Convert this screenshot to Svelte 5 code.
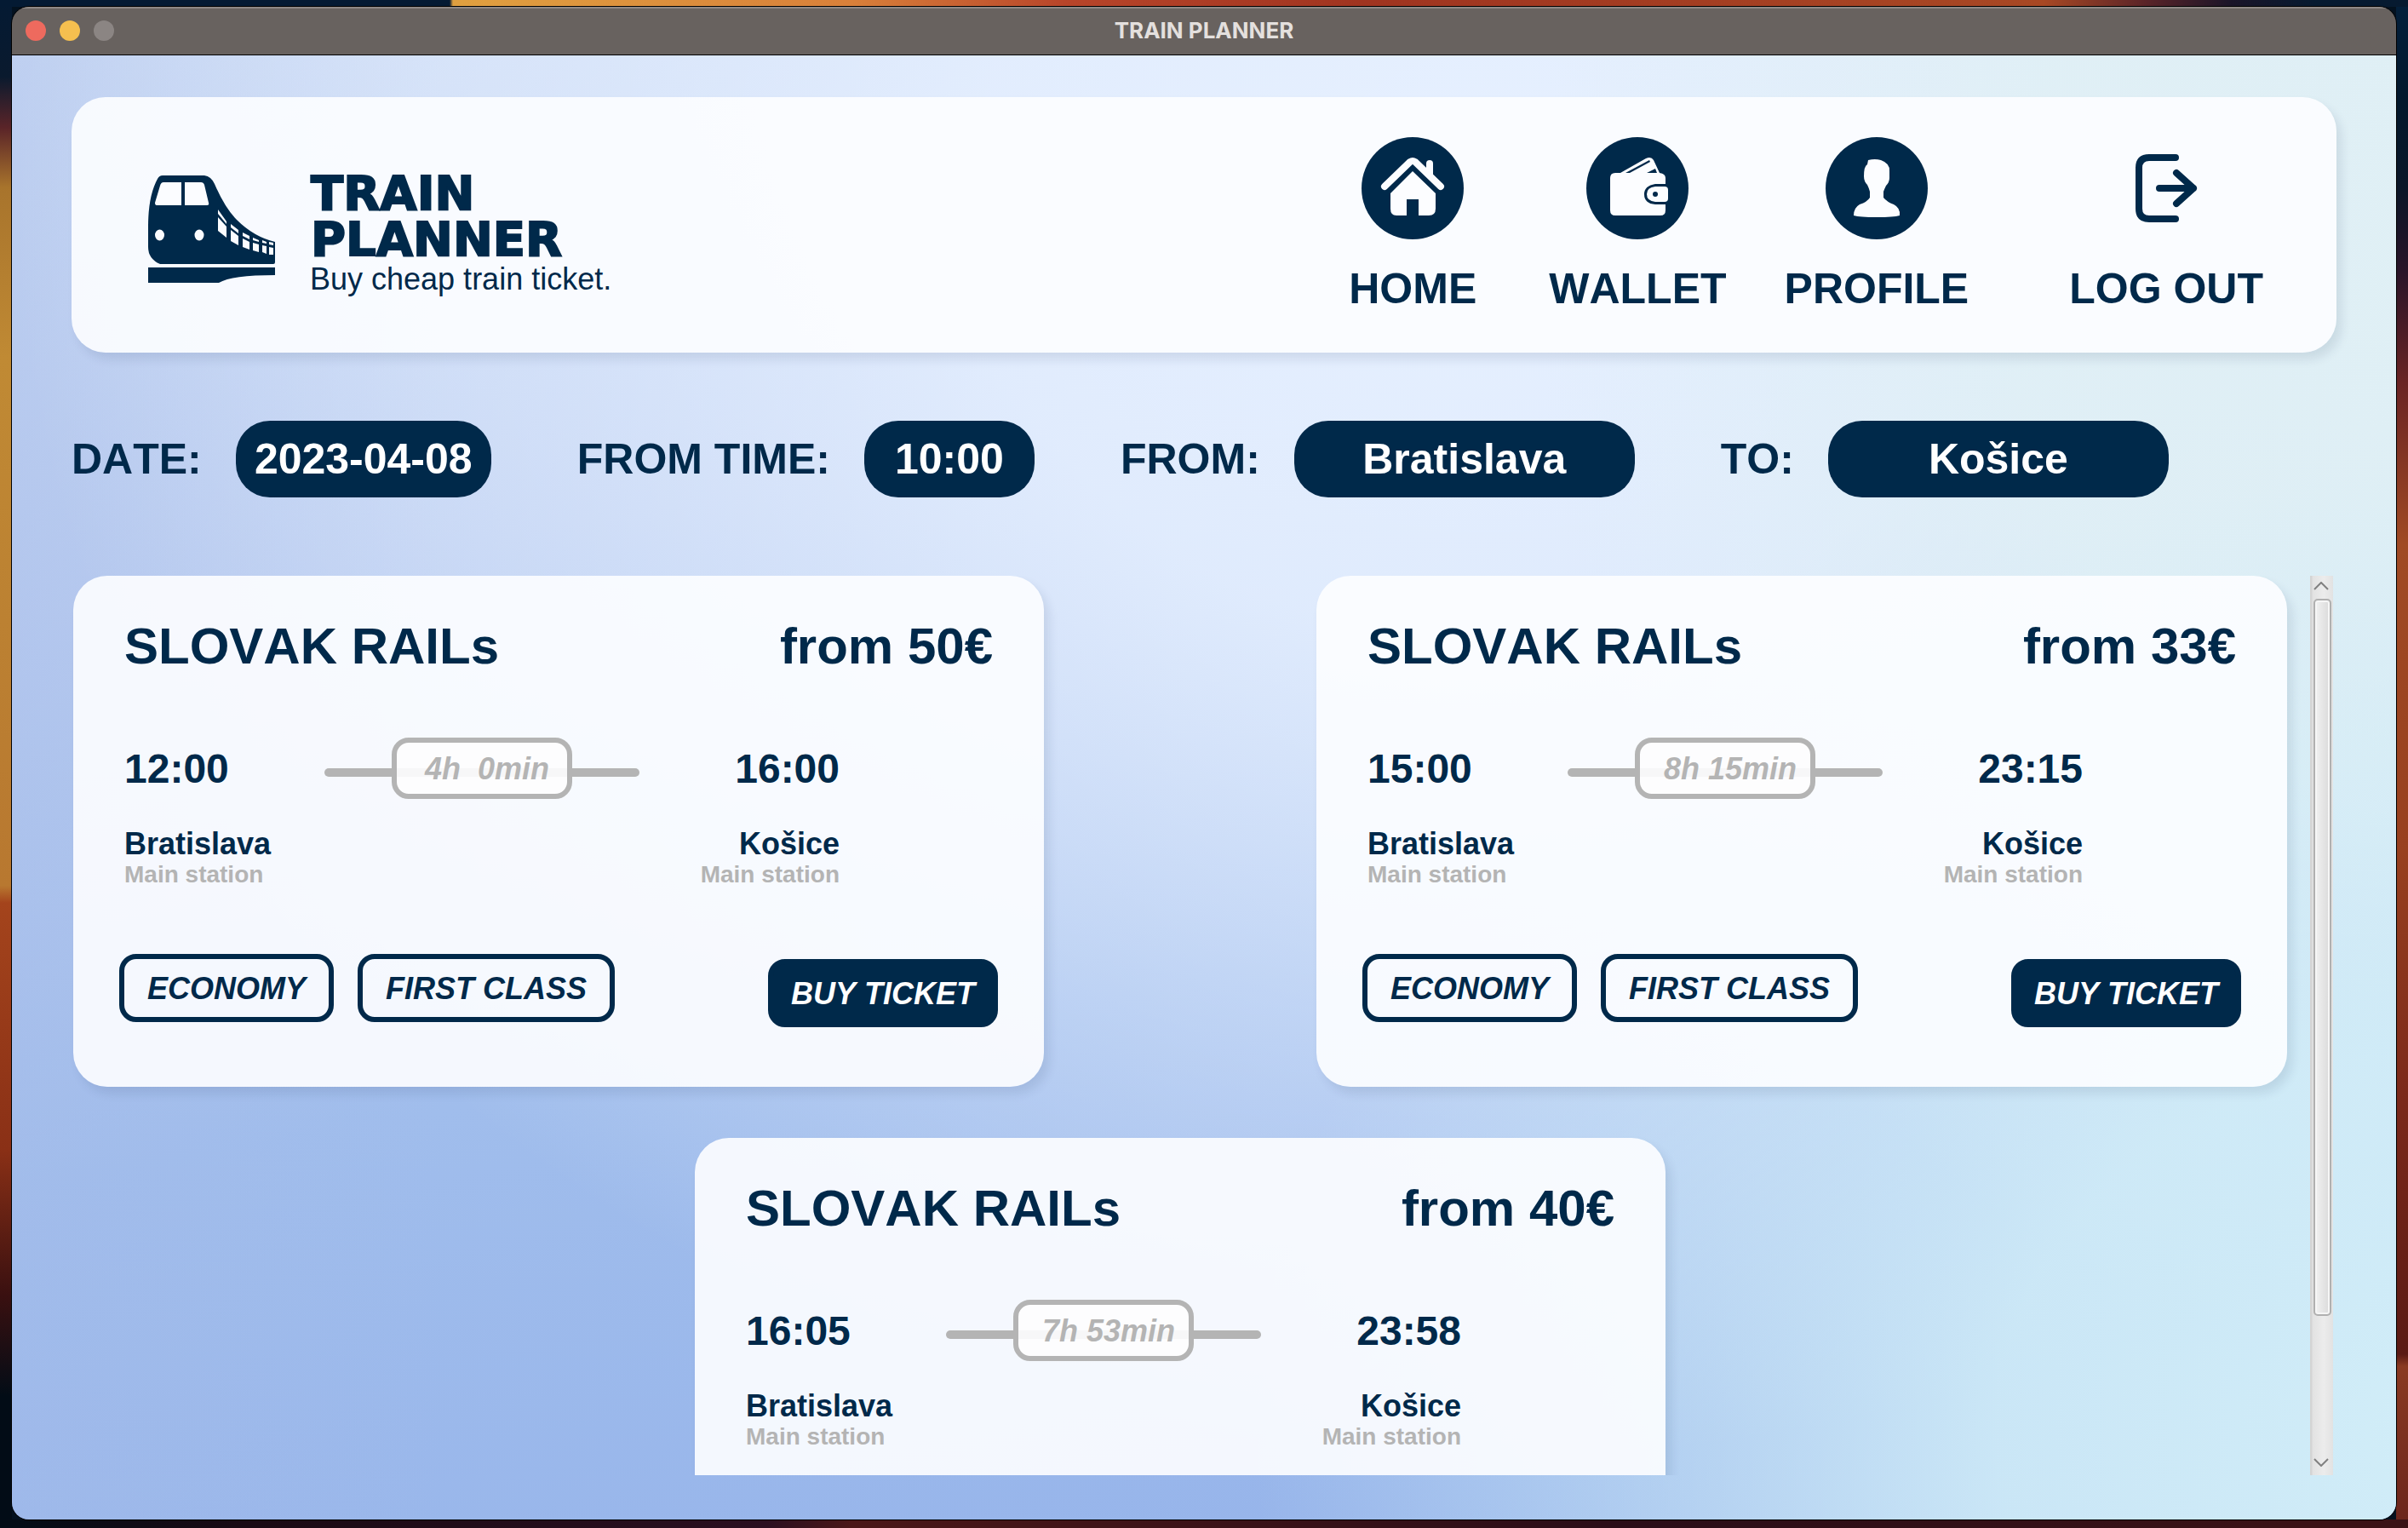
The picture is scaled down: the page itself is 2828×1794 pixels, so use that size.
<script>
  const trips = [
    { price: 50, dep: '12:00', arr: '16:00', dur: '4h\u00a0 0min', from: 'Bratislava', to: 'Košice' },
    { price: 33, dep: '15:00', arr: '23:15', dur: '8h 15min', from: 'Bratislava', to: 'Košice' },
    { price: 40, dep: '16:05', arr: '23:58', dur: '7h 53min', from: 'Bratislava', to: 'Košice' }
  ];
  let date = $state('2023-04-08');
  let time = $state('10:00');
  let from = $state('Bratislava');
  let to = $state('Košice');
</script>

<div class="desktop">
  <div class="window">
    <div class="titlebar">
      <div class="lights">
        <button class="light red" aria-label="Close"></button>
        <button class="light yellow" aria-label="Minimize"></button>
        <button class="light grey" aria-label="Zoom"></button>
      </div>
      <div class="title">TRAIN PLANNER</div>
    </div>

    <main>
      <header>
        <svg class="logo" viewBox="0 0 150 126" aria-hidden="true">
          <path d="M17 0H66Q74 1 78 10Q90 38 104 52Q124 72 149 78V102Q149 104 147 104H14Q0 98 0 84V60Q0 24 11 4Q13 0 17 0Z" />
          <path d="M0 108H149V117Q98 117 83 126H0Z" />
          <g class="cut">
            <path d="M18 8H39V35H10Q8 35 8 32L14 12Q15 8 18 8Z" />
            <path d="M43 8H62Q65 8 66 11L71 32Q72 35 69 35H43Z" />
            <ellipse cx="13.500" cy="70" rx="5.500" ry="6.500" />
            <ellipse cx="60" cy="70" rx="5.500" ry="6.500" />
            <path d="M82 40L92 54V57L82 45ZM82 49L92 60V73L82 65ZM97 57L106 64V68L97 61ZM97 64L106 71V82L97 77ZM111 67L119 71V75L111 71ZM111 74L119 78V87L111 84ZM123 73L130 76V78L123 76ZM123 79L130 81V90L123 88ZM134 76L139 78V80L134 79ZM134 82L139 83V92L134 90ZM142 78L147 79V82L142 81ZM142 84L147 85V93H142Z" />
          </g>
        </svg>
        <div class="brand">
          <h1>TRAIN<br />PLANNER</h1>
          <p>Buy cheap train ticket.</p>
        </div>
        <nav>
          <a href="#home" class="home">
            <svg viewBox="0 0 120 120" aria-hidden="true">
              <circle cx="60" cy="60" r="60" />
              <path class="cut" d="M60 40L87 66V84Q87 92 79 92H67V73H53V92H41Q34 92 34 84V66Z" />
              <path class="cut" d="M76 40V31Q76 27 80 27Q84 27 84 31V47Z" />
              <path class="roof" d="M27 58L57 29Q60 27 63 29L93 58" />
            </svg>
            HOME
          </a>
          <a href="#wallet" class="wallet">
            <svg viewBox="0 0 120 120" aria-hidden="true">
              <circle cx="60" cy="60" r="60" />
              <path class="cut" d="M40 42L70 25Q76 22 79 27L86 42Q93 43 93 48V55H81Q68 57 68 67Q68 78 81 79H93V86Q93 92 87 92H34Q28 92 28 86V48Q28 42 34 42Z" />
              <path d="M46 42L74 27L75 29L51 42ZM71 42L81 37L83 42Z" />
              <path class="cut" d="M81 58H92Q96 58 96 62V72Q96 76 92 76H81Q71 75 71 67Q71 59 81 58Z" />
              <circle cx="81" cy="67" r="3" />
            </svg>
            WALLET
          </a>
          <a href="#profile" class="profile">
            <svg viewBox="0 0 120 120" aria-hidden="true">
              <circle cx="60" cy="60" r="60" />
              <path class="cut" d="M50 27Q58 25 65 27Q76 31 75 40V48Q75 53 71 57Q69 61 68 64V71Q72 76 80 79Q88 83 87 92Q80 94 60 94Q40 94 33 92Q33 83 40 79Q49 76 52 71V64Q51 60 49 56Q45 52 45 46Q45 34 49 32Z" />
            </svg>
            PROFILE
          </a>
          <a href="#logout" class="logout">
            <svg viewBox="0 0 120 120" aria-hidden="true">
              <path class="line" d="M71 24H40Q28 24 28 36V84Q28 96 40 96H71M52 60H92M72 42L92 60L72 78" />
            </svg>
            LOG OUT
          </a>
        </nav>
      </header>

      <form class="search">
        <label for="date">DATE:</label>
        <input id="date" class="w300" bind:value={date} />
        <label for="time">FROM TIME:</label>
        <input id="time" class="w200" bind:value={time} />
        <label for="from">FROM:</label>
        <input id="from" class="w400" bind:value={from} />
        <label for="to">TO:</label>
        <input id="to" class="w400" bind:value={to} />
      </form>

      <section class="results">
        <div class="list">
          {#each trips as t}
            <article>
              <div class="top">
                <h2>SLOVAK RAILs</h2>
                <strong>from {t.price}€</strong>
              </div>
              <div class="route">
                <div class="stop">
                  <div class="time">{t.dep}</div>
                  <div class="city">{t.from}</div>
                  <div class="station">Main station</div>
                </div>
                <div class="track"><span class="duration">{t.dur}</span></div>
                <div class="stop end">
                  <div class="time">{t.arr}</div>
                  <div class="city">{t.to}</div>
                  <div class="station">Main station</div>
                </div>
              </div>
              <div class="actions">
                <button class="class">ECONOMY</button>
                <button class="class">FIRST CLASS</button>
                <button class="buy">BUY TICKET</button>
              </div>
            </article>
          {/each}
        </div>
        <div class="scrollbar">
          <button aria-label="Scroll up"><svg viewBox="0 0 18 10"><path d="M1 9L9 1L17 9" /></svg></button>
          <div class="groove"><div class="thumb"></div></div>
          <button aria-label="Scroll down"><svg viewBox="0 0 18 10"><path d="M1 1L9 9L17 1" /></svg></button>
        </div>
      </section>
    </main>
  </div>
</div>

<style>
  :global(body) {
    margin: 0;
  }
  * {
    box-sizing: border-box;
  }
  .desktop {
    height: 100vh;
    padding: 8px 14px 10px;
    color: #00294a;
    font-family: 'Liberation Sans', Arial, sans-serif;
    font-weight: 700;
    font-kerning: none;
    background:
      linear-gradient(90deg, #041a33 0, #041a33 528px, #e0a040 532px, #d9803a 1000px, #b8452a 1250px, #a03420 1600px, #a84824 2400px, #5a2428 2520px, #1a1428 2620px, #061a30 2720px) top / 100% 8px no-repeat,
      linear-gradient(90deg, #020c16 0, #1a0a14 300px, #2a0f20 900px, #4a1718 1000px, #2a0d18 1900px, #3a1216 2700px) bottom / 100% 10px no-repeat,
      linear-gradient(180deg, #041a33 0, #0a1a2e 90px, #5a2428 150px, #a8742c 220px, #c08a34 420px, #b87830 1040px, #a4441c 1060px, #8a3016 1350px, #3a1010 1520px, #020c16 1640px) left / 14px 100% no-repeat,
      linear-gradient(180deg, #03203c 0, #03182c 120px, #0a1628 220px, #2a1428 320px, #6a2424 450px, #a04a24 640px, #98401f 1000px, #7a281a 1300px, #5a1a14 1590px, #8a3a22 1604px, #6a241c 1794px) right / 14px 100% no-repeat,
      #03111f;
  }
  .window {
    height: 100%;
    display: flex;
    flex-direction: column;
    border-radius: 20px;
    overflow: hidden;
    box-shadow: 0 0 0 1px #000;
  }
  .titlebar {
    flex: none;
    height: 57px;
    padding: 0 16px 2px;
    display: grid;
    grid-template-columns: 1fr auto 1fr;
    align-items: center;
    background: #68625f;
    border-top: 2px solid #8f8986;
    border-bottom: 1px solid #000;
  }
  .lights {
    display: flex;
    gap: 16px;
  }
  .light {
    width: 24px;
    height: 24px;
    padding: 0;
    border: 0;
    border-radius: 50%;
  }
  .red {
    background: #ee6a5e;
  }
  .yellow {
    background: #f5bf4f;
  }
  .grey {
    background: #8b8583;
  }
  .title {
    font: 700 26px/40px Inter, sans-serif;
    color: #e4e0de;
  }
  main {
    flex: 1;
    min-height: 0;
    padding: 49px 70px 52px;
    display: flex;
    flex-direction: column;
    background:
      radial-gradient(ellipse 52% 66% at 104% 94%, #d2eef8 0%, #d2eef8dd 40%, #d2eef800 100%),
      radial-gradient(ellipse 40% 75% at 104% 15%, #e0f0f5 0%, #e0f0f5dd 50%, #e0f0f500 100%),
      radial-gradient(ellipse 62% 86% at 62% 10%, #e6f0ff 0%, #e6f0ffdd 35%, #e6f0ff00 100%),
      linear-gradient(90deg, #a4bae866 0, #a4bae800 18%),
      linear-gradient(170deg, #d0def6 0%, #bccef1 30%, #a0bdec 60%, #94b2ea 100%);
  }
  header,
  article {
    background: rgba(252, 253, 255, 0.92);
    border-radius: 40px;
    box-shadow: 6px 8px 12px rgba(20, 40, 80, 0.1);
  }
  header {
    flex: none;
    height: 300px;
    padding: 0 86px 0 90px;
    display: flex;
    align-items: flex-start;
  }
  .logo {
    width: 150px;
    height: 126px;
    margin-top: 92px;
    fill: #00294a;
  }
  .cut {
    fill: #fbfcff;
  }
  .brand {
    margin: 86px auto 0 40px;
  }
  h1 {
    margin: 0;
    padding-left: 1px;
    font: 700 56px/54px 'DejaVu Sans', sans-serif;
    -webkit-text-stroke: 2px #00294a;
  }
  p {
    margin: 0;
    font-size: 36px;
    line-height: 40px;
    font-weight: 400;
  }
  nav {
    display: flex;
    margin-top: 47px;
  }
  a {
    display: flex;
    flex-direction: column;
    align-items: center;
    gap: 30px;
    color: inherit;
    font-size: 50px;
    line-height: 56px;
    text-decoration: none;
    white-space: nowrap;
  }
  a svg {
    width: 120px;
    height: 120px;
    fill: #00294a;
  }
  a .cut {
    fill: #fcfdff;
  }
  a .roof {
    fill: none;
    stroke: #fcfdff;
    stroke-width: 8;
    stroke-linecap: round;
  }
  .line {
    fill: none;
    stroke: #00294a;
    stroke-width: 8;
    stroke-linecap: round;
    stroke-linejoin: round;
  }
  .wallet {
    margin-left: 85px;
  }
  .profile {
    margin-left: 68px;
  }
  .logout {
    margin-left: 118px;
  }
  .search {
    flex: none;
    display: flex;
    align-items: center;
    margin-top: 80px;
    font-size: 50px;
  }
  .search label {
    margin-right: 40px;
    white-space: nowrap;
  }
  .search input {
    height: 90px;
    padding: 0;
    margin-right: 101px;
    border: 0;
    border-radius: 40px;
    background: #00294a;
    color: #fff;
    font: inherit;
    text-align: center;
  }
  .search .w300 {
    width: 300px;
  }
  .search .w200 {
    width: 200px;
  }
  .search .w400 {
    width: 400px;
  }
  .search input:last-child {
    margin-right: 0;
  }
  .results {
    flex: 1;
    min-height: 0;
    margin: 92px 4px 0 2px;
    display: flex;
    justify-content: space-between;
  }
  .list {
    flex: 1;
    margin-left: -20px;
    padding: 0 27px 0 20px;
    overflow: hidden;
    display: flex;
    flex-wrap: wrap;
    justify-content: center;
    align-content: flex-start;
    gap: 60px 320px;
  }
  article {
    width: 1140px;
    height: 600px;
    padding: 48px 54px 0;
  }
  .top {
    display: flex;
    justify-content: space-between;
    padding: 0 6px;
    font-size: 60px;
    line-height: 70px;
  }
  h2 {
    margin: 0;
    font-size: 60px;
  }
  .route {
    display: flex;
    justify-content: space-between;
    width: 846px;
    margin-top: 72px;
    padding: 0 0 0 6px;
  }
  .stop {
    width: 200px;
    margin-top: 9px;
  }
  .end {
    text-align: right;
  }
  .time {
    font-size: 48px;
    line-height: 56px;
  }
  .city {
    margin-top: 40px;
    font-size: 36px;
    line-height: 40px;
  }
  .station {
    font-size: 28px;
    line-height: 32px;
    color: #b4b4b4;
  }
  .track {
    width: 370px;
    height: 72px;
    margin: 0 auto 0 35px;
    display: flex;
    align-items: center;
  }
  .track::before,
  .track::after {
    content: '';
    flex: 1;
    height: 10px;
    margin-top: 10px;
    background: #b4b4b4;
    border-radius: 5px 0 0 5px;
  }
  .track::after {
    border-radius: 0 5px 5px 0;
  }
  .duration {
    width: 212px;
    height: 72px;
    padding: 1px 0 0 12px;
    border: 6px solid #b4b4b4;
    border-radius: 20px;
    background: linear-gradient(#f7f7f8, #f7f7f8) 0 30px / 100% 10px no-repeat #fdfdfe;
    color: #b4b4b4;
    font-size: 36px;
    line-height: 60px;
    font-style: italic;
    text-align: center;
  }
  .actions {
    display: flex;
    margin-top: 77px;
    gap: 28px;
  }
  .actions button {
    height: 80px;
    padding: 2px 27px 0;
    border: 6px solid #00294a;
    border-radius: 20px;
    background: transparent;
    color: #00294a;
    font: italic 700 36px/66px 'Liberation Sans', Arial, sans-serif;
    font-kerning: none;
  }
  .actions .buy {
    margin: 6px 0 0 auto;
    padding: 2px 21px 0;
    background: #00294a;
    color: #fff;
  }
  .scrollbar {
    width: 27px;
    padding-left: 4px;
    display: flex;
    flex-direction: column;
    background: linear-gradient(90deg, #d4d4d4 0, #d4d4d4 2px, #e2e2e2 3px, #ececec 60%, #e2e2e2 100%);
  }
  .scrollbar button {
    height: 27px;
    padding: 0 5px 4px 0;
    border: 0;
    background: none;
    display: flex;
    align-items: center;
    justify-content: center;
  }
  .scrollbar svg {
    width: 18px;
    height: 10px;
    fill: none;
    stroke: #808080;
    stroke-width: 2;
  }
  .groove {
    flex: 1;
  }
  .thumb {
    width: 21px;
    height: 84%;
    border: 2px solid #b0b0b0;
    border-radius: 5px;
    background: linear-gradient(90deg, #f2f2f2, #dadada);
    box-shadow: inset 0 0 0 2px #f6f6f6;
  }
</style>
